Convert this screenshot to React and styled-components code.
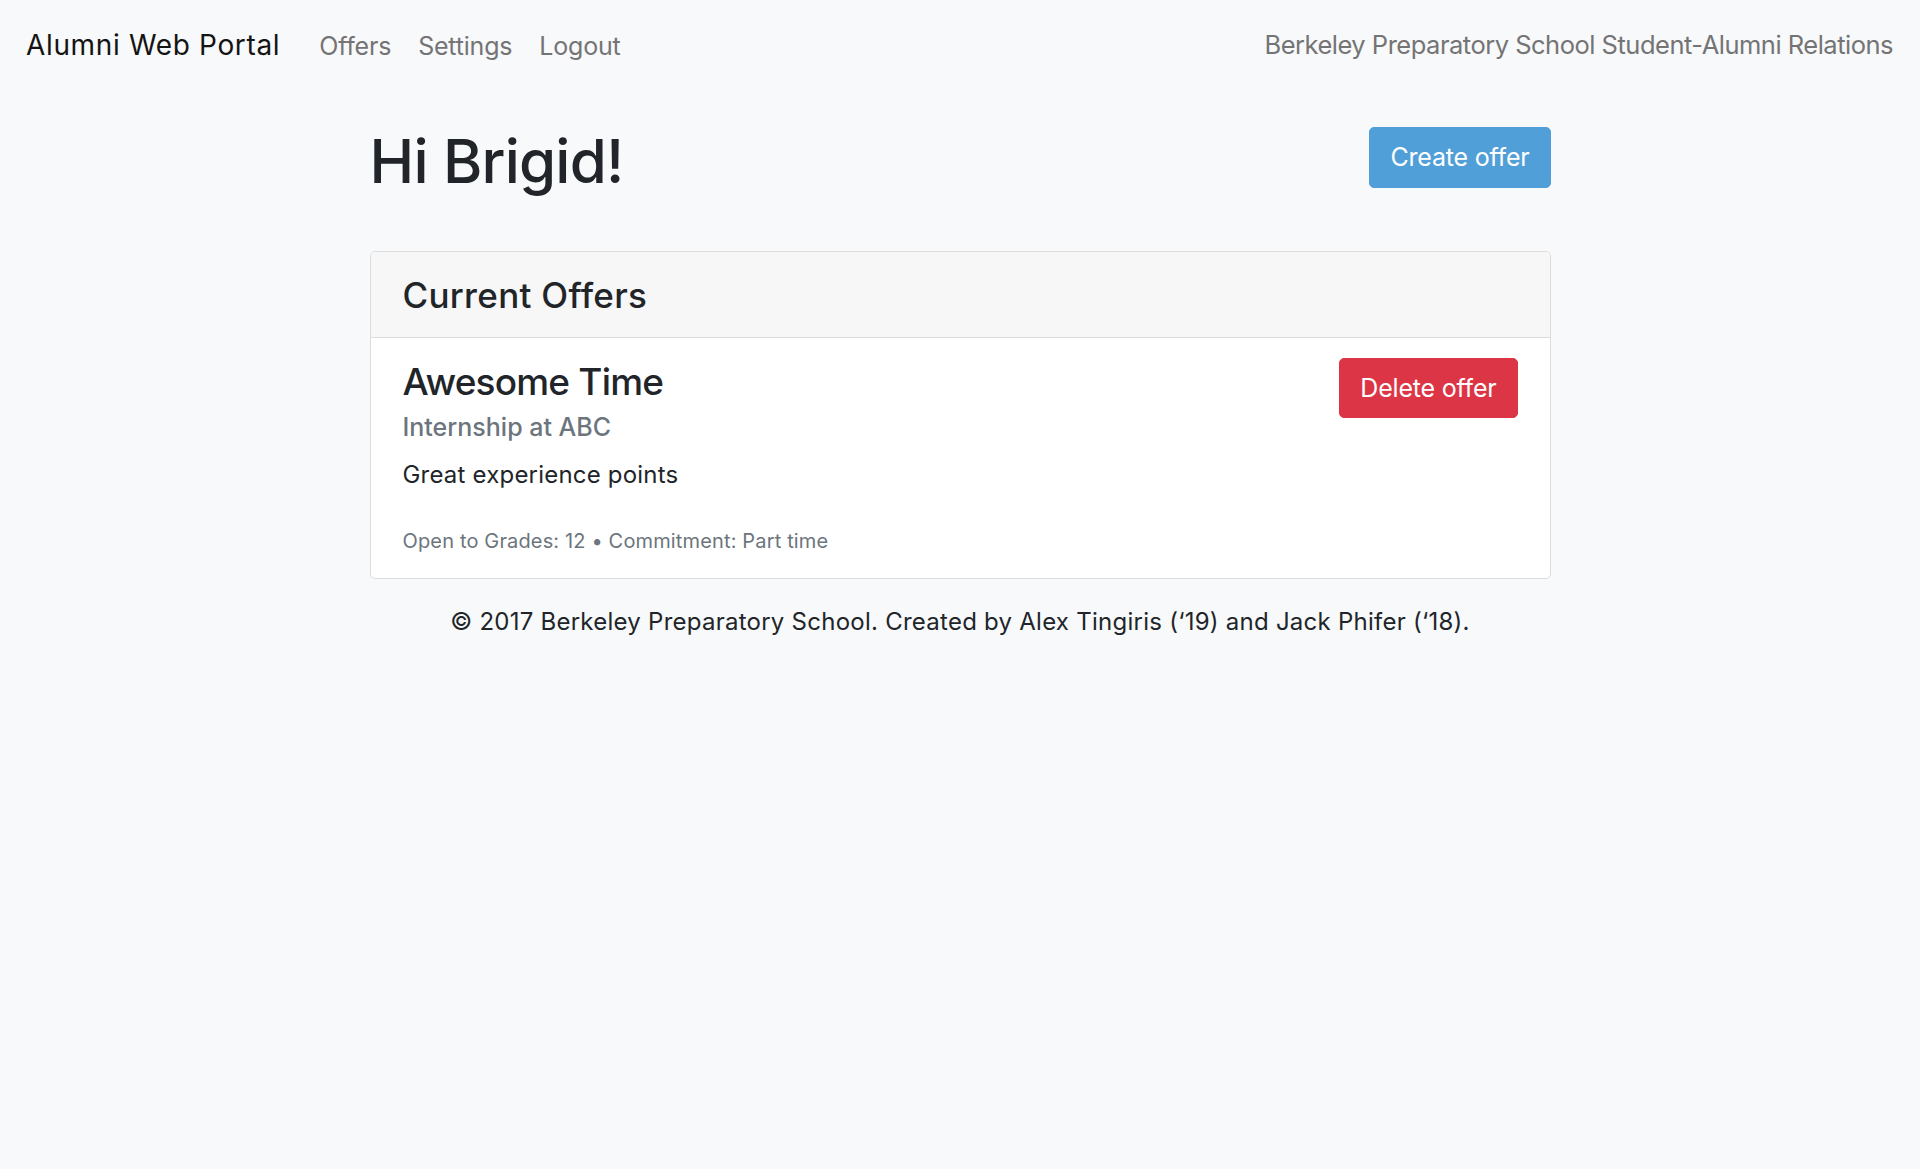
import React from "react";
import styled, { createGlobalStyle } from "styled-components";

const Global = createGlobalStyle`
  * { box-sizing: border-box; }
  html, body { margin: 0; padding: 0; }
  body {
    background: #f8f9fa;
    color: #212529;
    font-family: Inter, "Noto Sans", "Liberation Sans", sans-serif;
    min-height: 1169px;
  }
`;

const Nav = styled.nav`
  height: 90px;
  padding: 0 27px 0 26px;
  display: flex;
  align-items: center;
  justify-content: space-between;
`;

const NavLeft = styled.div`
  display: flex;
  align-items: baseline;
`;

const Brand = styled.a`
  font-size: 28px;
  line-height: 28px;
  color: #141414;
  text-decoration: none;
  margin-right: 39px;
  letter-spacing: 0.65px;
`;

const NavLink = styled.a`
  font-size: 25px;
  line-height: 28px;
  color: #747475;
  text-decoration: none;
  margin-right: 27px;
  letter-spacing: -0.2px;
`;

const NavText = styled.span`
  font-size: 25.5px;
  line-height: 28px;
  color: #747475;
  letter-spacing: -0.5px;
`;

const Main = styled.main`
  width: 1181px;
  margin: 37px auto 0;
`;

const HeaderRow = styled.div`
  display: flex;
  justify-content: space-between;
  align-items: flex-start;
`;

const Title = styled.h1`
  margin: -2px 0 0;
  font-size: 60px;
  line-height: 72px;
  font-weight: 500;
  letter-spacing: -0.8px;
`;

const Button = styled.button`
  font-family: inherit;
  font-size: 25px;
  line-height: 37px;
  padding: 11px 20px;
  border-radius: 5px;
  border: 1px solid ${(p) => p.$color};
  background: ${(p) => p.$color};
  color: #fff;
  cursor: pointer;
  letter-spacing: -0.2px;
  height: ${(p) => p.$h}px;
`;

const Card = styled.section`
  margin-top: 54px;
  background: #fff;
  border: 1px solid #dcdcdc;
  border-radius: 5px;
  overflow: hidden;
`;

const CardHeader = styled.div`
  background: #f7f7f7;
  border-bottom: 1px solid #dcdcdc;
  padding: 22px 32px 21px;
`;

const CardHeading = styled.h3`
  margin: 0;
  font-size: 35px;
  line-height: 42px;
  font-weight: 500;
  letter-spacing: 0.3px;
`;

const CardBody = styled.div`
  padding: 20px 32px 25px;
  display: flex;
  justify-content: space-between;
  align-items: flex-start;
`;

const OfferInfo = styled.div`
  display: flex;
  flex-direction: column;
`;

const OfferTitle = styled.h2`
  margin: 0;
  font-size: 37px;
  line-height: 48px;
  font-weight: 500;
  letter-spacing: -0.8px;
`;

const OfferSubtitle = styled.h5`
  margin: 6px 0 0;
  font-size: 25px;
  line-height: 30px;
  font-weight: 500;
  color: #6c757d;
  letter-spacing: 0;
`;

const OfferText = styled.p`
  margin: 19px 0 0;
  font-size: 24px;
  line-height: 28px;
  letter-spacing: 0.2px;
`;

const OfferMeta = styled.small`
  margin-top: 40px;
  font-size: 20px;
  line-height: 24px;
  color: #6c757d;
  letter-spacing: 0.15px;
`;

const Footer = styled.footer`
  margin-top: 30px;
  text-align: center;
  font-size: 24px;
  line-height: 26px;
  letter-spacing: 0.25px;
`;

export default function App() {
  return (
    <>
      <Global />
      <Nav>
        <NavLeft>
          <Brand href="#">Alumni Web Portal</Brand>
          <NavLink href="#">Offers</NavLink>
          <NavLink href="#">Settings</NavLink>
          <NavLink href="#">Logout</NavLink>
        </NavLeft>
        <NavText>Berkeley Preparatory School Student-Alumni Relations</NavText>
      </Nav>
      <Main>
        <HeaderRow>
          <Title>Hi Brigid!</Title>
          <Button $color="#519fd8" $h={61}>Create offer</Button>
        </HeaderRow>
        <Card>
          <CardHeader>
            <CardHeading>Current Offers</CardHeading>
          </CardHeader>
          <CardBody>
            <OfferInfo>
              <OfferTitle>Awesome Time</OfferTitle>
              <OfferSubtitle>Internship at ABC</OfferSubtitle>
              <OfferText>Great experience points</OfferText>
              <OfferMeta>Open to Grades: 12 • Commitment: Part time</OfferMeta>
            </OfferInfo>
            <Button $color="#dc3545" $h={60}>Delete offer</Button>
          </CardBody>
        </Card>
        <Footer>
          © 2017 Berkeley Preparatory School. Created by Alex Tingiris (‘19) and Jack Phifer (‘18).
        </Footer>
      </Main>
    </>
  );
}
